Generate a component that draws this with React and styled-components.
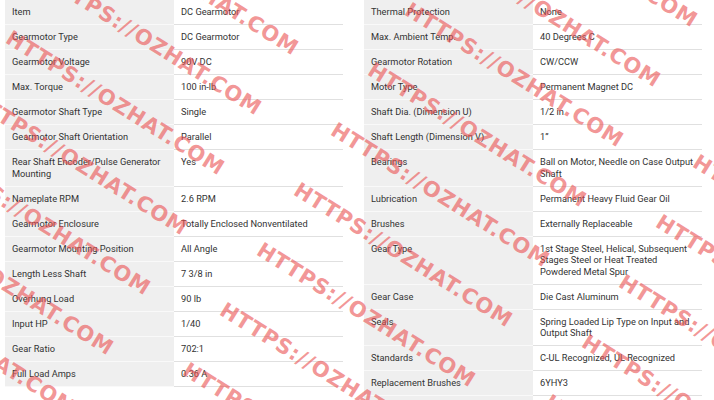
import styled, { createGlobalStyle } from "styled-components";

const Global = createGlobalStyle`
  html, body {
    margin: 0;
    padding: 0;
    background: #ffffff;
  }
`;

const Page = styled.div`
  position: relative;
  width: 714px;
  height: 400px;
  overflow: hidden;
  display: flex;
  align-items: flex-start;
  gap: 21px;
  padding-left: 5px;
  box-sizing: border-box;
  font-family: Roboto, "Liberation Sans", sans-serif;
`;

const Table = styled.table`
  width: 338px;
  table-layout: fixed;
  border-collapse: separate;
  border-spacing: 0;
  font-size: 9.25px;
  line-height: 11.5px;
  color: #333333;
`;

const Label = styled.td`
  width: 169px;
  box-sizing: border-box;
  padding: 6.25px 7px;
  vertical-align: top;
  background: #efefef;
  border-bottom: 1px solid #f9f9f9;
`;

const Value = styled.td`
  padding: 6.25px 7px;
  vertical-align: top;
  background: #ffffff;
  border-bottom: 1px solid #e0e0e0;
`;

const Watermarks = styled.div`
  position: absolute;
  inset: 0;
  pointer-events: none;
`;

const Mark = styled.span`
  position: absolute;
  transform-origin: 0 50%;
  transform: rotate(32deg);
  white-space: nowrap;
  font-family: "DejaVu Sans", sans-serif;
  font-weight: 700;
  font-size: 21px;
  line-height: 24px;
  letter-spacing: 0.8px;
  color: rgba(234, 80, 80, 0.6);
`;

const left = [
  ["Item", "DC Gearmotor"],
  ["Gearmotor Type", "DC Gearmotor"],
  ["Gearmotor Voltage", "90V DC"],
  ["Max. Torque", "100 in-lb"],
  ["Gearmotor Shaft Type", "Single"],
  ["Gearmotor Shaft Orientation", "Parallel"],
  ["Rear Shaft Encoder/Pulse Generator Mounting", "Yes"],
  ["Nameplate RPM", "2.6 RPM"],
  ["Gearmotor Enclosure", "Totally Enclosed Nonventilated"],
  ["Gearmotor Mounting Position", "All Angle"],
  ["Length Less Shaft", "7 3/8 in"],
  ["Overhung Load", "90 lb"],
  ["Input HP", "1/40"],
  ["Gear Ratio", "702:1"],
  ["Full Load Amps", "0.36 A"],
];

const right = [
  ["Thermal Protection", "None"],
  ["Max. Ambient Temp.", "40 Degrees C"],
  ["Gearmotor Rotation", "CW/CCW"],
  ["Motor Type", "Permanent Magnet DC"],
  ["Shaft Dia. (Dimension U)", "1/2 in"],
  ["Shaft Length (Dimension V)", "1\u201d"],
  ["Bearings", "Ball on Motor, Needle on Case Output Shaft"],
  ["Lubrication", "Permanent Heavy Fluid Gear Oil"],
  ["Brushes", "Externally Replaceable"],
  ["Gear Type", "1st Stage Steel, Helical, Subsequent Stages Steel or Heat Treated Powdered Metal Spur"],
  ["Gear Case", "Die Cast Aluminum"],
  ["Seals", "Spring Loaded Lip Type on Input and Output Shaft"],
  ["Standards", "C-UL Recognized, UL Recognized"],
  ["Replacement Brushes", "6YHY3"],
  ["\u00a0", "\u00a0"],
];

// watermark lattice, measured from the picture
const marks = [];
for (let i = -1; i <= 1; i++) {
  for (let k = -5; k <= 6; k++) {
    const x = 339 + 362 * i - 37 * k;
    const y = 128 + 32 * i + 60 * k;
    if (x + 240 > 0 && x < 714 && y + 150 > 0 && y < 410) marks.push([x, y]);
  }
}

const SpecTable = ({ rows }) => (
  <Table>
    <tbody>
      {rows.map(([k, v], n) => (
        <tr key={n}>
          <Label>{k}</Label>
          <Value>{v}</Value>
        </tr>
      ))}
    </tbody>
  </Table>
);

export default function App() {
  return (
    <>
      <Global />
      <Page>
        <SpecTable rows={left} />
        <SpecTable rows={right} />
        <Watermarks>
          {marks.map(([x, y], n) => (
            <Mark key={n} style={{ left: x - 6, top: y - 12 }}>
              HTTPS://OZHAT.COM
            </Mark>
          ))}
        </Watermarks>
      </Page>
    </>
  );
}
